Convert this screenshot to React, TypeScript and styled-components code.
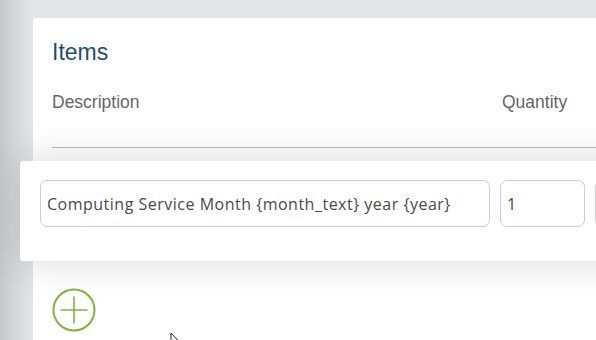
import { createGlobalStyle, styled } from "styled-components";

const GlobalStyle = createGlobalStyle`
  html, body {
    margin: 0;
    height: 340px;
    overflow: hidden;
  }

  body {
    font-family: "Liberation Sans", Arial, sans-serif;
    background: linear-gradient(
      to right,
      #c6c7cb 0px,
      #d3d4d8 12px,
      #dfe0e4 26px,
      #e4e5e9 34px,
      #e4e5e9 100%
    );
  }
`;

const columns = [
  { id: "description", label: "Description", width: 450 },
  { id: "quantity", label: "Quantity", width: 95 },
  { id: "price", label: "Unit price", width: 140 },
];

const App: React.FC = () => {
  return (
    <>
      <GlobalStyle />
      <Page>
        <Card>
          <Title>Items</Title>
          <HeaderRow>
            {columns.map((col) => (
              <HeaderCell key={col.id} $width={col.width}>
                {col.label}
              </HeaderCell>
            ))}
          </HeaderRow>

          <DraggedRow>
            <Field
              $width={450}
              defaultValue="Computing Service Month {month_text} year {year}"
            />
            <Field $width={85} defaultValue="1" />
            <Field $width={120} defaultValue="" />
          </DraggedRow>

          <AddButton type="button" aria-label="Add item">
            <svg width="44" height="44" viewBox="0 0 44 44">
              <circle
                cx="22"
                cy="22"
                r="20.5"
                fill="none"
                stroke="#80b43c"
                strokeWidth="2"
              />
              <path
                d="M8.5 22h27M22 8.5v27"
                stroke="#80b43c"
                strokeWidth="1.6"
                fill="none"
              />
            </svg>
          </AddButton>
        </Card>
      </Page>
      <Pointer width="14" height="20" viewBox="0 0 14 20">
        <path
          d="M1 1v15l3.5-3.5 2.5 6 2-1-2.5-5.8H11z"
          fill="#fff"
          stroke="#222"
          strokeWidth="1"
        />
      </Pointer>
    </>
  );
};

const Page = styled.div`
  padding: 18px 0 0 33px;
  width: 700px;
`;

const Card = styled.section`
  background: #fff;
  border-radius: 4px 0 0 0;
  padding: 19px 0 40px 19px;
  min-height: 320px;
  box-sizing: border-box;
`;

const Title = styled.h2`
  margin: 0;
  font-size: 23px;
  font-weight: 400;
  line-height: 30px;
  color: #1d4f70;
`;

const HeaderRow = styled.div`
  display: flex;
  align-items: center;
  height: 62px;
  margin-top: 17px;
  border-bottom: 1px solid #bdbdbd;
  padding-bottom: 1px;
`;

const HeaderCell = styled.div<{ $width: number }>`
  flex: 0 0 ${(p) => p.$width}px;
  font-size: 17.5px;
  color: #666;
  margin-top: -26px;
  white-space: nowrap;
`;

const DraggedRow = styled.div`
  position: relative;
  z-index: 1;
  display: flex;
  gap: 10px;
  height: 100px;
  box-sizing: border-box;
  margin: 13px 0 0 -32px;
  padding: 19px 0 0 20px;
  background: #fff;
  border-radius: 3px;
  box-shadow: 0 0 40px rgba(0, 0, 0, 0.16);
`;

const Field = styled.input<{ $width: number }>`
  flex: 0 0 ${(p) => p.$width}px;
  width: ${(p) => p.$width}px;
  height: 47px;
  box-sizing: border-box;
  border: 1px solid #cdcdcd;
  border-radius: 7px;
  padding: 0 6px;
  font-family: "Open Sans", sans-serif;
  font-size: 16px;
  letter-spacing: 0.5px;
  color: #4a4a4a;
  background: #fff;
  outline: none;
`;

const AddButton = styled.button`
  display: block;
  margin: 27px 0 0 0;
  padding: 0;
  border: none;
  background: transparent;
  width: 44px;
  height: 44px;
  cursor: pointer;

  svg {
    display: block;
  }
`;

const Pointer = styled.svg`
  position: absolute;
  left: 170px;
  top: 332px;
`;

export default App;
